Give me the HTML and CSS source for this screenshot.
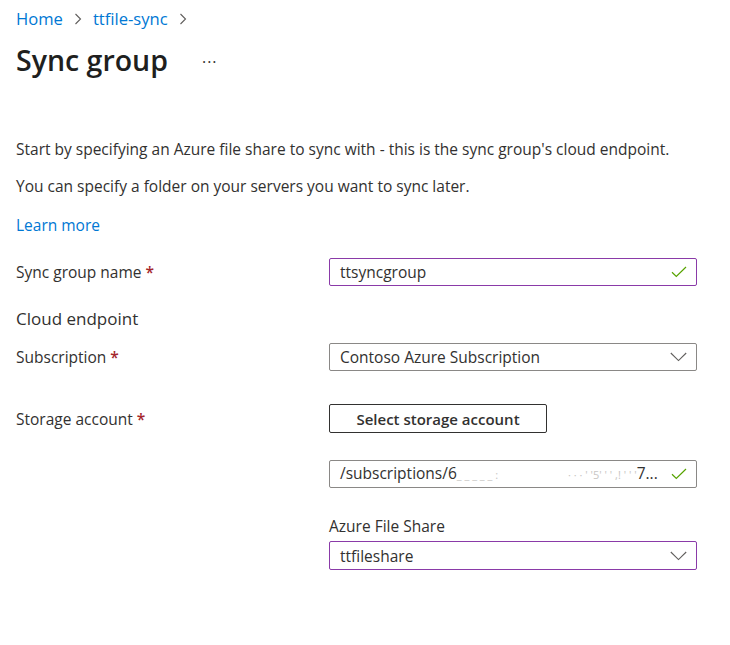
FILE: index.html
```html
<!DOCTYPE html>
<html lang="en">
<head>
<meta charset="utf-8">
<title>Sync group</title>
<link rel="stylesheet" href="styles.css">
</head>
<body>
<nav class="breadcrumb">
  <a class="crumb" href="#">Home</a>
  <span class="sep"><svg width="8" height="12" viewBox="0 0 8 12"><path d="M1.5 1 L6.5 6 L1.5 11" fill="none" stroke="#605e5c" stroke-width="1.1"/></svg></span>
  <a class="crumb" href="#">ttfile-sync</a>
  <span class="sep"><svg width="8" height="12" viewBox="0 0 8 12"><path d="M1.5 1 L6.5 6 L1.5 11" fill="none" stroke="#605e5c" stroke-width="1.1"/></svg></span>
</nav>
<header class="title-row">
  <h1 class="title">Sync group</h1>
  <span class="more">&middot;&middot;&middot;</span>
</header>

<p class="intro first">Start by specifying an Azure file share to sync with - this is the sync group's cloud endpoint.</p>
<p class="intro">You can specify a folder on your servers you want to sync later.</p>
<a class="learn" href="#">Learn more</a>

<div class="row row-name">
  <label class="label">Sync group name <span class="req">*</span></label>
  <div class="field field-focus">
    <span class="value">ttsyncgroup</span>
    <svg class="icon" width="16" height="12" viewBox="0 0 16 12"><path d="M1 6.2 L5.3 10.4 L15 1" fill="none" stroke="#57a300" stroke-width="1.2"/></svg>
  </div>
</div>

<h2 class="section">Cloud endpoint</h2>

<div class="row row-sub">
  <label class="label">Subscription <span class="req">*</span></label>
  <div class="field">
    <span class="value">Contoso Azure Subscription</span>
    <svg class="icon" width="17" height="10" viewBox="0 0 17 10"><path d="M0.8 1 L8.5 8.6 L16.2 1" fill="none" stroke="#605e5c" stroke-width="1.1"/></svg>
  </div>
</div>

<div class="row row-storage">
  <label class="label">Storage account <span class="req">*</span></label>
  <div class="stack">
    <button class="btn" type="button">Select storage account</button>
    <div class="field field-path">
      <span class="value">/subscriptions/6<span class="redact">_ _ _ _ _ :</span><span class="gap"></span><span class="redact">· · · ' '5' ' ' ,! ' ' '</span>7...</span>
      <svg class="icon" width="16" height="12" viewBox="0 0 16 12"><path d="M1 6.2 L5.3 10.4 L15 1" fill="none" stroke="#57a300" stroke-width="1.2"/></svg>
    </div>
    <div class="sub-label">Azure File Share</div>
    <div class="field field-focus field-share">
      <span class="value">ttfileshare</span>
      <svg class="icon" width="17" height="10" viewBox="0 0 17 10"><path d="M0.8 1 L8.5 8.6 L16.2 1" fill="none" stroke="#605e5c" stroke-width="1.1"/></svg>
    </div>
  </div>
</div>
</body>
</html>
```
FILE: styles.css
```css
html, body {
  margin: 0;
  padding: 0;
  background: #ffffff;
}
body {
  padding: 0 16px;
  font-family: "Open Sans", "Noto Sans", sans-serif;
  font-size: 15.5px;
  color: #323130;
}
.breadcrumb {
  display: flex;
  align-items: center;
  gap: 11px;
  padding-top: 8px;
  height: 22px;
  font-size: 16.6px;
  line-height: 22px;
}
.crumb {
  color: #0078d4;
  text-decoration: none;
}
.sep {
  display: flex;
  align-items: center;
  height: 22px;
}
.title-row {
  display: flex;
  align-items: center;
  margin-top: 12px;
  height: 36px;
}
.title {
  margin: 0;
  font-size: 28.5px;
  line-height: 36px;
  font-weight: 600;
  color: #201f1e;
}
.more {
  margin-left: 34px;
  font-size: 16px;
  letter-spacing: 1px;
  color: #323130;
  padding-top: 4px;
}
.intro {
  margin: 17px 0 0;
  line-height: 20px;
}
.intro.first {
  margin-top: 61px;
}
.learn {
  display: block;
  margin-top: 19px;
  line-height: 20px;
  color: #0078d4;
  text-decoration: none;
  width: max-content;
}
.row {
  display: grid;
  grid-template-columns: 313px 368px;
  align-items: center;
}
.row-name {
  margin-top: 23px;
}
.label {
  line-height: 20px;
}
.req {
  color: #a4262c;
  font-weight: 600;
}
.field {
  box-sizing: border-box;
  height: 28px;
  border: 1px solid #8a8886;
  border-radius: 2px;
  display: flex;
  align-items: center;
  justify-content: space-between;
  padding: 0 9px 0 10px;
  white-space: nowrap;
  overflow: hidden;
}
.field-focus {
  border-color: #8a3aa8;
}
.value {
  line-height: 20px;
}
.icon {
  flex: none;
}
.section {
  margin: 21px 0 0;
  font-size: 17px;
  line-height: 24px;
  font-weight: 400;
  color: #323130;
}
.row-sub {
  margin-top: 12px;
}
.row-storage {
  margin-top: 33px;
  align-items: start;
}
.row-storage .label {
  margin-top: 5px;
}
.stack {
  display: flex;
  flex-direction: column;
  align-items: flex-start;
}
.btn {
  box-sizing: border-box;
  width: 218px;
  height: 29px;
  border: 1px solid #323130;
  border-radius: 2px;
  background: #ffffff;
  font-family: inherit;
  font-size: 15px;
  font-weight: 600;
  color: #323130;
  padding: 0;
}
.field-path {
  width: 100%;
  margin-top: 27px;
}
.redact {
  color: #c8c6c4;
  font-size: 11px;
}
.gap {
  display: inline-block;
  width: 70px;
}
.sub-label {
  margin-top: 28px;
  line-height: 20px;
}
.field-share {
  width: 100%;
  height: 29px;
  margin-top: 5px;
}
```
